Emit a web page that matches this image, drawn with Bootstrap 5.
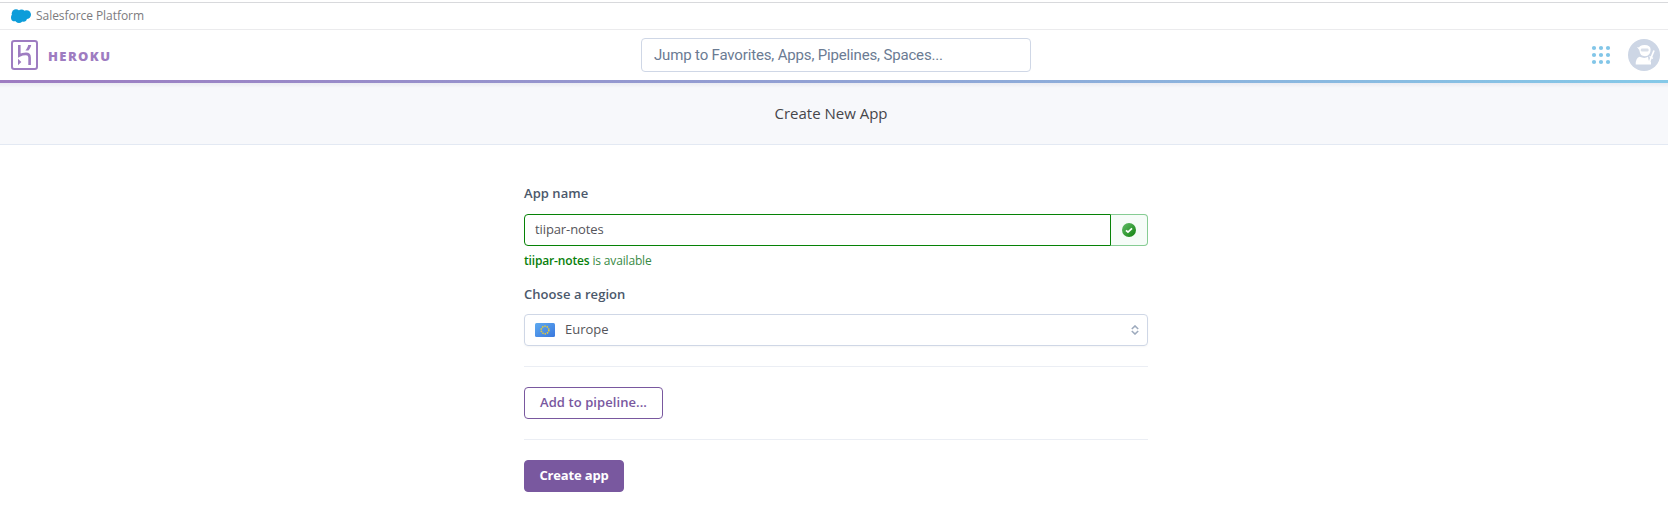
<!DOCTYPE html>
<html lang="en">
<head>
<meta charset="utf-8">
<meta name="viewport" content="width=device-width, initial-scale=1">
<title>Create New App | Heroku</title>
<link href="https://cdn.jsdelivr.net/npm/bootstrap@5.3.0/dist/css/bootstrap.min.css" rel="stylesheet">
<style>
body{font-family:"Open Sans","Noto Sans",sans-serif;font-size:13px;line-height:20px;color:#3f3f44;background:#fff;overflow:hidden}
.platform-wrap{border-top:1px solid #d8d9dc;height:28px;margin-top:2px;border-bottom:1px solid #ebebed;padding-left:11px;gap:5px;color:#7c7b7e;font-size:12px;letter-spacing:-.05px}
.main-nav{height:50px;padding:0 8px 0 11px}
.brand-word{font-weight:800;font-size:13px;line-height:20px;letter-spacing:1.4px;color:#9e7cc1;margin:2px 0 0 10px;width:63px}
.jump{width:390px;height:34px;border:1px solid #cfd7e6;border-radius:4px;padding:0 12px;font:15px/32px Roboto,sans-serif;letter-spacing:-.16px;color:#6b7b93;margin-left:530px}
.jump::placeholder{color:#6b7b93;opacity:1}
.rule{height:3px;background:linear-gradient(90deg,#9e7cc1,#85c9e8)}
.title-band{height:62px;background:linear-gradient(#eaebf1,#f7f8fb 5px);border-bottom:1px solid #e3e9f3;font-size:15px;color:#46464b;padding:0 6px 2px 0}
.create-form{width:624px;margin-left:524px;padding-top:38px}
.field-label{display:block;font-weight:600;font-size:13px;line-height:20px;letter-spacing:.05px;color:#4b586b}
.app-row{margin-top:11px}
.app-input{height:32px;width:587px;border:1px solid #068206;border-radius:4px 0 0 4px;padding:0 10px 2px;color:#55555a;font-size:13px;letter-spacing:-.1px}
.ok-box{width:37px;height:32px;border:1px solid #86cc93;border-left:0;border-radius:0 4px 4px 0;background:#f6fcf8}
.help{font-size:12px;line-height:18px;letter-spacing:-.16px;color:#388a45;margin-top:6px}
.help b{font-weight:600;color:#08800b}
.region-label{margin:14px 0 10px}
.region{height:32px;border:1px solid #cfd7e6;border-radius:4px;padding:0 8px 0 10px;color:#55555a;box-shadow:0 1px 2px #0000000a}
.region-name{margin:-2px 0 0 10px}
.sep{height:1px;margin:20px 0;background:#ebeef4}
.act{height:32px;border-radius:4px;font-size:13px;font-weight:600;line-height:20px;padding:4px 0 6px;border:1px solid #79589f}
.act-line{width:139px;color:#79589f;background:#fff;letter-spacing:.08px}
.act-fill{width:100px;color:#fff;background:#79589f;font-weight:700;letter-spacing:-.15px}
</style>
</head>
<body>
<div class="platform-wrap d-flex align-items-center">
  <svg width="20" height="14" viewBox="0 0 20 14" fill="#0d9dda"><circle cx="5" cy="4.5" r="4.3"/><circle cx="10.5" cy="4.2" r="3.6"/><circle cx="15.6" cy="5.6" r="4.4"/><circle cx="3.9" cy="8.4" r="3.9"/><circle cx="8" cy="10.3" r="3.7"/><circle cx="12.3" cy="9" r="3.7"/></svg>
  <span>Salesforce Platform</span>
</div>
<nav class="main-nav d-flex align-items-center">
  <svg width="27" height="30" viewBox="0 0 27 30" fill="none" stroke="#9e7cc1"><rect x="1" y="1" width="25" height="28" rx="2.2" stroke-width="2"/><path d="M8.3 5V15.5C10 14.6 12.5 13.9 15 13.9C18 13.9 18.6 15.5 18.6 17.5V25" stroke-width="2.6"/><path d="M7 18.8L10.3 22L7 25.2Z" fill="#9e7cc1" stroke="none"/><path d="M17.2 5H20.2C19.9 7 18.9 8.8 17.4 10.4H14.4C15.8 8.8 16.9 7 17.2 5Z" fill="#9e7cc1" stroke="none"/></svg>
  <span class="brand-word">HEROKU</span>
  <input class="jump" type="text" placeholder="Jump to Favorites, Apps, Pipelines, Spaces...">
  <div class="ms-auto d-flex align-items-center">
    <svg width="20" height="20" viewBox="0 0 20 20" fill="#82c6e8"><circle cx="3" cy="3" r="2.1"/><circle cx="10" cy="3" r="2.1"/><circle cx="17" cy="3" r="2.1"/><circle cx="3" cy="10" r="2.1"/><circle cx="10" cy="10" r="2.1"/><circle cx="17" cy="10" r="2.1"/><circle cx="3" cy="17" r="2.1"/><circle cx="10" cy="17" r="2.1"/><circle cx="17" cy="17" r="2.1"/></svg>
    <svg class="ms-3 ps-0" width="33" height="32" viewBox="-1 0 33 32"><circle cx="16" cy="16" r="16" fill="#cdd6e5"/><g fill="#fff"><path d="M10.8 9.5Q11 6 16.5 6Q22.6 6 22.6 10.5Q22.6 17 17 17.2Q12 17 11.6 12.2Z"/><path d="M7.7 25.5Q7.5 19.5 11.5 17.8Q16.8 20 20 17.8L20.7 21.5L23 22.5V25.5Z"/><path d="M11.5 8.6L9 8L11.3 11Z"/></g><rect x="12.8" y="9.6" width="7.8" height="2.8" rx="1.2" fill="#d9dfe9"/><path d="M26 11.5L21.8 22" stroke="#fff" stroke-width="1.7"/><path d="M21.5 17.5L25 19.3" stroke="#fff" stroke-width="1.3"/></svg>
  </div>
</nav>
<div class="rule"></div>
<header class="title-band d-flex align-items-center justify-content-center">Create New App</header>
<main class="create-form">
  <label class="field-label" for="app">App name</label>
  <div class="app-row d-flex">
    <input id="app" class="app-input" value="tiipar-notes">
    <span class="ok-box d-flex align-items-center justify-content-center"><svg width="14" height="14" viewBox="0 0 14 14"><defs><linearGradient id="ok" x1="0" y1="0" x2="1" y2="1"><stop stop-color="#62bd69"/><stop offset="1" stop-color="#12820e"/></linearGradient></defs><circle cx="7" cy="7" r="7" fill="url(#ok)"/><path d="M4 7.3L6 9.2L10 5.4" fill="none" stroke="#fff" stroke-width="1.7"/></svg></span>
  </div>
  <div class="help"><b>tiipar-notes</b> is available</div>
  <label class="field-label region-label">Choose a region</label>
  <div class="region d-flex align-items-center">
    <svg width="20" height="14" viewBox="0 0 20 14"><defs><linearGradient id="eu" x1="0" y1="0" x2="1" y2="1"><stop stop-color="#5eaaf0"/><stop offset="1" stop-color="#3a78de"/></linearGradient></defs><rect width="20" height="14" rx="1.5" fill="url(#eu)"/><circle cx="10" cy="7" r="3.8" fill="none" stroke="#e3ca3a" stroke-width="1.6" stroke-dasharray="1.5 .89"/></svg>
    <span class="region-name">Europe</span>
    <svg class="ms-auto" width="8" height="10" viewBox="0 0 8 10" fill="none" stroke="#9daabd" stroke-width="1.6"><path d="M.8 4L4 1L7.2 4M.8 6L4 9L7.2 6"/></svg>
  </div>
  <div class="sep"></div>
  <button class="act act-line d-block">Add to pipeline...</button>
  <div class="sep"></div>
  <button class="act act-fill d-block">Create app</button>
</main>
</body>
</html>
